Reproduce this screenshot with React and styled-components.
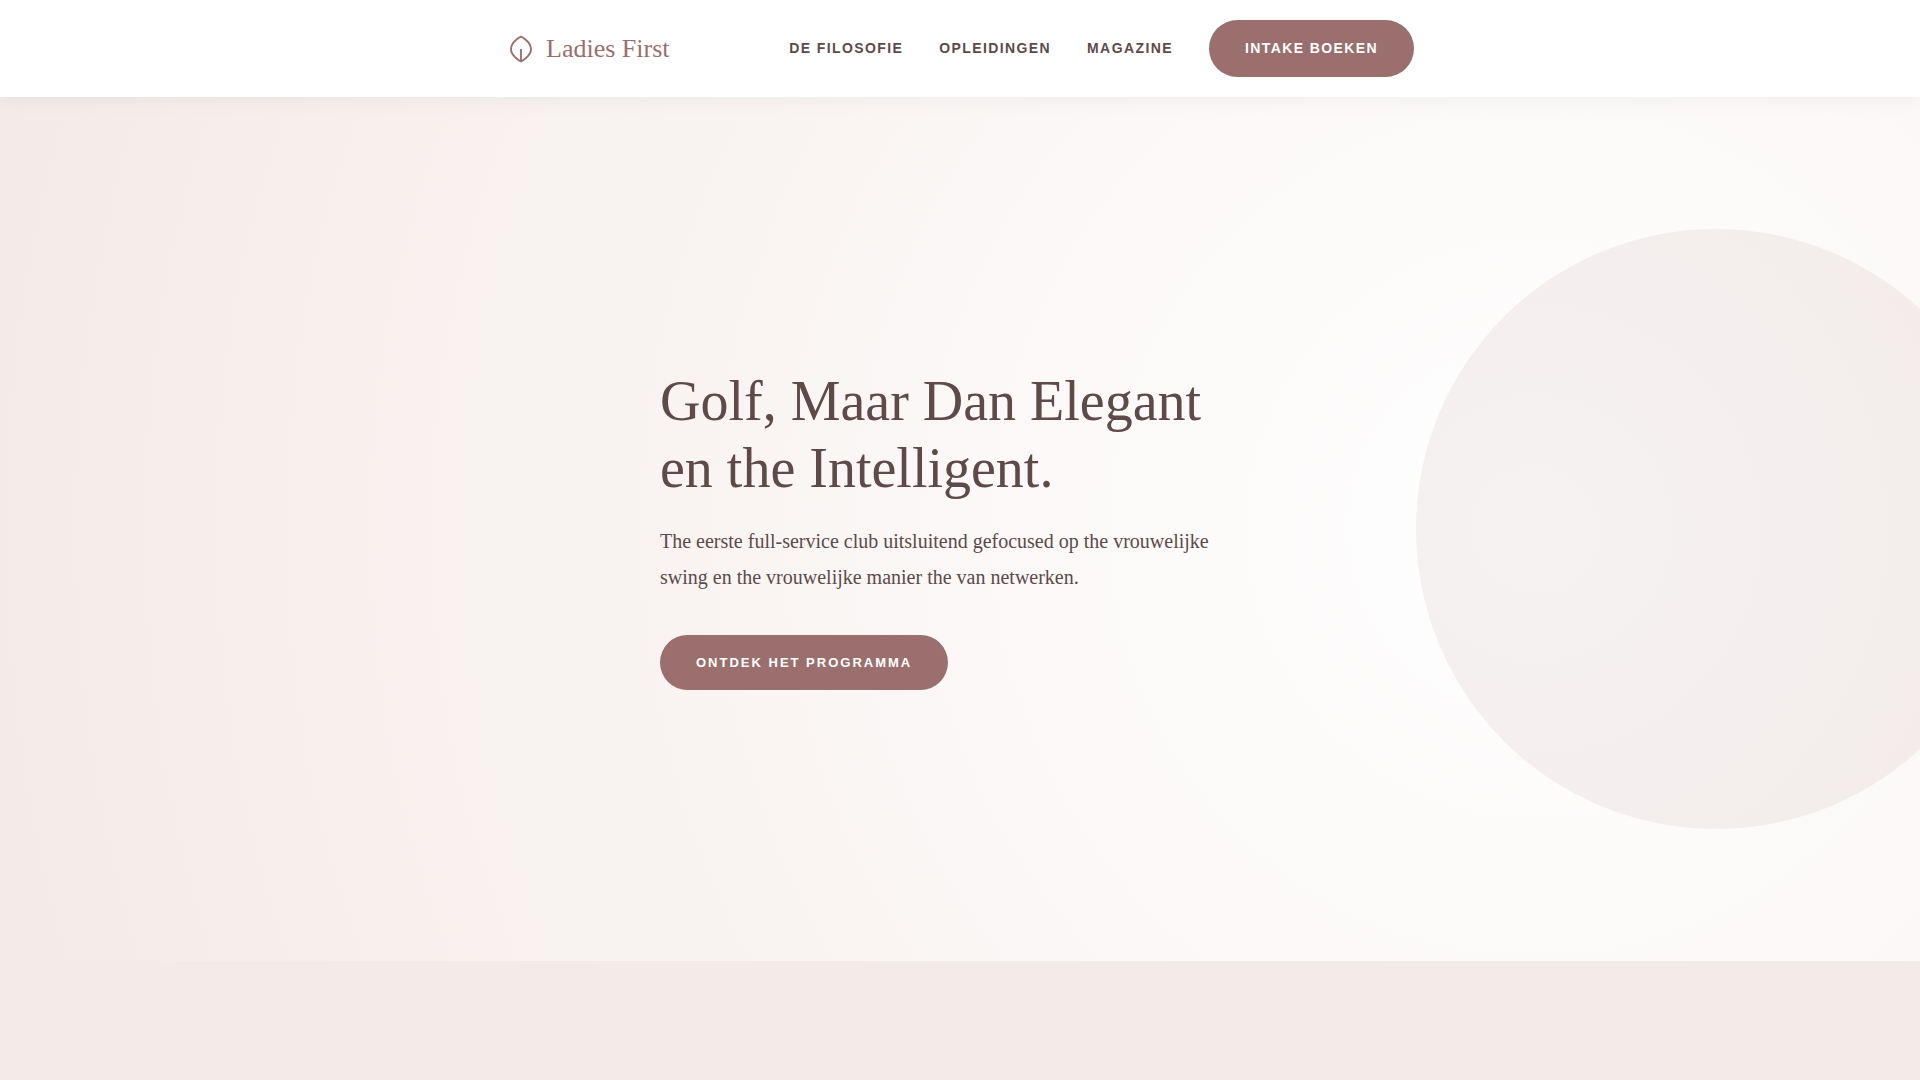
import React from 'react';
import styled, { createGlobalStyle } from 'styled-components';

const colors = {
  primary: '#9b6f6d',
  text: '#5d4a49',
  blush: '#f4ebe8',
  white: '#ffffff',
};

const GlobalStyle = createGlobalStyle`
  * {
    box-sizing: border-box;
  }

  body {
    margin: 0;
    background-color: ${colors.blush};
    color: ${colors.text};
    font-family: 'Liberation Serif', serif;
  }
`;

const Header = styled.header`
  position: relative;
  z-index: 1;
  padding: 20px;
  background-color: ${colors.white};
  box-shadow: 0 2px 20px rgba(0, 0, 0, 0.05);
`;

const HeaderInner = styled.div`
  display: flex;
  flex-wrap: wrap;
  align-items: center;
  justify-content: space-between;
  gap: 20px;
  max-width: 908px;
  margin: 0 auto;
`;

const Logo = styled.a`
  display: flex;
  align-items: center;
  gap: 10px;
  color: ${colors.primary};
  font-size: 26px;
  line-height: 30px;
  text-decoration: none;

  svg {
    width: 30px;
    height: 30px;
  }
`;

const Nav = styled.nav`
  display: flex;
  flex-wrap: wrap;
  align-items: center;
  gap: 36px;
`;

const NavLink = styled.a`
  color: ${colors.text};
  font-family: 'Liberation Sans', sans-serif;
  font-size: 14px;
  font-weight: bold;
  letter-spacing: 0.1em;
  line-height: 17px;
  text-decoration: none;
  text-transform: uppercase;
`;

const Button = styled.a`
  display: inline-block;
  padding: 20px 36px;
  border-radius: 50px;
  background-color: ${colors.primary};
  color: ${colors.white};
  font-family: 'Liberation Sans', sans-serif;
  font-size: ${({ $small }) => ($small ? '13px' : '14px')};
  font-weight: bold;
  letter-spacing: ${({ $small }) => ($small ? '2px' : '0.1em')};
  line-height: ${({ $small }) => ($small ? '15px' : '17px')};
  text-decoration: none;
  text-transform: uppercase;
`;

const Hero = styled.section`
  position: relative;
  display: flex;
  align-items: center;
  justify-content: center;
  min-height: 80vh;
  padding: 40px 20px;
  overflow: hidden;
  background: radial-gradient(circle at 80% 50%, ${colors.white}, ${colors.blush});

  &::before {
    content: '';
    position: absolute;
    top: 50%;
    right: -5%;
    width: 600px;
    height: 600px;
    border-radius: 50%;
    background-color: ${colors.primary};
    opacity: 0.09;
    transform: translateY(-50%);
  }
`;

const HeroContent = styled.div`
  position: relative;
  max-width: 600px;
`;

const Title = styled.h1`
  margin: 0 0 21px;
  font-size: 56px;
  font-weight: normal;
  line-height: 67px;
`;

const Intro = styled.p`
  margin: 0 0 40px;
  font-size: 20px;
  line-height: 36px;
`;

const LeafIcon = () => (
  <svg viewBox="0 0 24 24" fill="none" stroke="currentColor" strokeWidth="1.5" aria-hidden="true">
    <path d="M12 22C12 22 20 18 20 12C20 6 12 2 12 2C12 2 4 6 4 12C4 18 12 22 12 22Z" />
    <path d="M12 22V12" />
  </svg>
);

const App = () => (
  <>
    <GlobalStyle />
    <Header>
      <HeaderInner>
        <Logo href="/">
          <LeafIcon />
          Ladies First
        </Logo>
        <Nav>
          <NavLink href="#filosofie">De Filosofie</NavLink>
          <NavLink href="#opleidingen">Opleidingen</NavLink>
          <NavLink href="#magazine">Magazine</NavLink>
          <Button href="#intake">Intake boeken</Button>
        </Nav>
      </HeaderInner>
    </Header>
    <Hero>
      <HeroContent>
        <Title>Golf, Maar Dan Elegant en the Intelligent.</Title>
        <Intro>
          The eerste full-service club uitsluitend gefocused op the vrouwelijke
          swing en the vrouwelijke manier the van netwerken.
        </Intro>
        <Button href="#programma" $small>Ontdek het programma</Button>
      </HeroContent>
    </Hero>
  </>
);

export default App;
